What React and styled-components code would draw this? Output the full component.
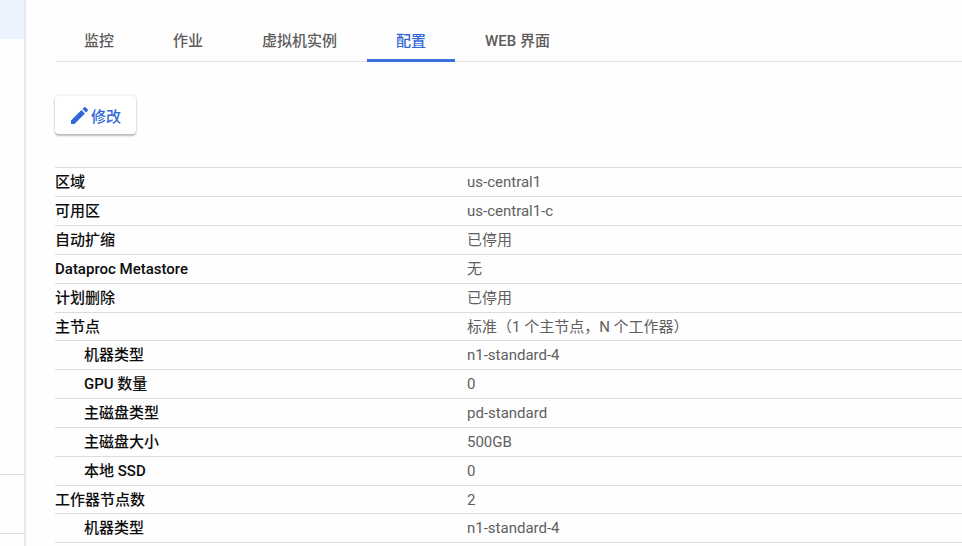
import React, { useState } from "react";
import styled, { createGlobalStyle } from "styled-components";

const TABS = ["监控", "作业", "虚拟机实例", "配置", "WEB 界面"];

const SECTIONS = [
  {
    id: "general",
    rows: [
      { label: "区域", value: "us-central1" },
      { label: "可用区", value: "us-central1-c" },
      { label: "自动扩缩", value: "已停用" },
      { label: "Dataproc Metastore", value: "无" },
      { label: "计划删除", value: "已停用" },
    ],
  },
  {
    id: "master",
    heading: { label: "主节点", value: "标准（1 个主节点，N 个工作器）" },
    rows: [
      { label: "机器类型", value: "n1-standard-4" },
      { label: "GPU 数量", value: "0" },
      { label: "主磁盘类型", value: "pd-standard" },
      { label: "主磁盘大小", value: "500GB" },
      { label: "本地 SSD", value: "0" },
    ],
  },
  {
    id: "worker",
    heading: { label: "工作器节点数", value: "2" },
    rows: [{ label: "机器类型", value: "n1-standard-4" }],
  },
];

const Section = ({ heading, rows }) => (
  <tbody>
    {heading && (
      <HeadingRow>
        <Label scope="row">{heading.label}</Label>
        <Value>{heading.value}</Value>
      </HeadingRow>
    )}
    {rows.map((row) => (
      <Row key={row.label}>
        <Label scope="row" $nested={Boolean(heading)}>
          {row.label}
        </Label>
        <Value>{row.value}</Value>
      </Row>
    ))}
  </tbody>
);

const App = () => {
  const [activeTab, setActiveTab] = useState("配置");

  return (
    <>
      <GlobalStyle />
      <Layout>
        <Sidebar>
          <SidebarCurrent />
          <SidebarFooter>
            <SidebarSlot />
            <SidebarToggle />
          </SidebarFooter>
        </Sidebar>
        <Main>
          <TabList role="tablist">
            {TABS.map((tab) => (
              <Tab
                key={tab}
                type="button"
                role="tab"
                aria-selected={tab === activeTab}
                $active={tab === activeTab}
                onClick={() => setActiveTab(tab)}
              >
                {tab}
              </Tab>
            ))}
          </TabList>
          <Toolbar>
            <EditButton type="button">
              <EditIcon viewBox="3 3 18 18" aria-hidden="true">
                <path d="M3 17.25V21h3.75L17.81 9.94l-3.75-3.75L3 17.25zM20.71 7.04a1 1 0 0 0 0-1.41l-2.34-2.34a1 1 0 0 0-1.41 0l-1.83 1.83 3.75 3.75 1.83-1.83z" />
              </EditIcon>
              修改
            </EditButton>
          </Toolbar>
          <ConfigTable>
            {SECTIONS.map((section) => (
              <Section key={section.id} {...section} />
            ))}
          </ConfigTable>
        </Main>
      </Layout>
    </>
  );
};

export default App;

const GlobalStyle = createGlobalStyle`
  * {
    box-sizing: border-box;
  }
  body {
    margin: 0;
    color: #606060;
    background-color: #fefefe;
    font-family: Roboto, "Noto Sans CJK SC", sans-serif;
    font-size: 15px;
  }
  button {
    font: inherit;
  }
`;

const Layout = styled.div`
  display: flex;
  min-height: 100vh;
`;

//sidebar
const Sidebar = styled.aside`
  display: flex;
  flex-direction: column;
  flex: none;
  width: 26px;
  border-right: 2px solid #e6e7e9;
`;
const SidebarCurrent = styled.div`
  height: 39px;
  background-color: #edf3fe;
`;
const SidebarFooter = styled.div`
  margin-top: auto;
`;
const SidebarSlot = styled.div`
  height: 59px;
  border-top: 1px solid #dedede;
`;
const SidebarToggle = styled.div`
  height: 13px;
  border-top: 1px solid #dedede;
`;

//content
const Main = styled.main`
  flex: 1;
  min-width: 0;
  padding-left: 29px;
`;
const TabList = styled.div`
  display: flex;
  gap: 1px;
  padding-top: 20px;
  box-shadow: inset 0 -1px #e4e4e4;
`;
const Tab = styled.button`
  height: 42px;
  padding: 0 29px;
  border: 0;
  border-bottom: 3px solid ${({ $active }) => ($active ? "#3b6fdc" : "transparent")};
  color: ${({ $active }) => ($active ? "#3367d6" : "#5c5c5c")};
  background: none;
  font-weight: 500;
  white-space: nowrap;
  cursor: pointer;
`;
const Toolbar = styled.div`
  display: flex;
  padding: 34px 0 33px;
`;
const EditButton = styled.button`
  display: flex;
  align-items: center;
  gap: 3px;
  height: 38px;
  padding: 0 15px 0 16px;
  border: 0;
  border-radius: 4px;
  color: #3367d6;
  background-color: #fff;
  box-shadow: 0 2px 2px rgba(0, 0, 0, 0.24), 0 0 3px rgba(0, 0, 0, 0.14);
  font-weight: 500;
  cursor: pointer;
`;
const EditIcon = styled.svg`
  width: 17px;
  height: 17px;
  fill: currentColor;
`;

//configuration table
const ConfigTable = styled.table`
  width: 100%;
  border-top: 1px solid #dcdcdc;
  border-spacing: 0;
  table-layout: fixed;
`;
const Row = styled.tr`
  height: 29px;
`;
const HeadingRow = styled.tr`
  height: 28px;
`;
const Cell = styled.td`
  padding: 0;
  border-bottom: 1px solid #dcdcdc;
  line-height: 24px;
  text-align: left;
  vertical-align: middle;
`;
const Label = styled(Cell).attrs({ as: "th" })`
  width: 412px;
  padding-left: ${({ $nested }) => ($nested ? "29px" : "0")};
  color: #0c0c0c;
  font-weight: 500;
`;
const Value = styled(Cell)`
  color: #606060;
`;
